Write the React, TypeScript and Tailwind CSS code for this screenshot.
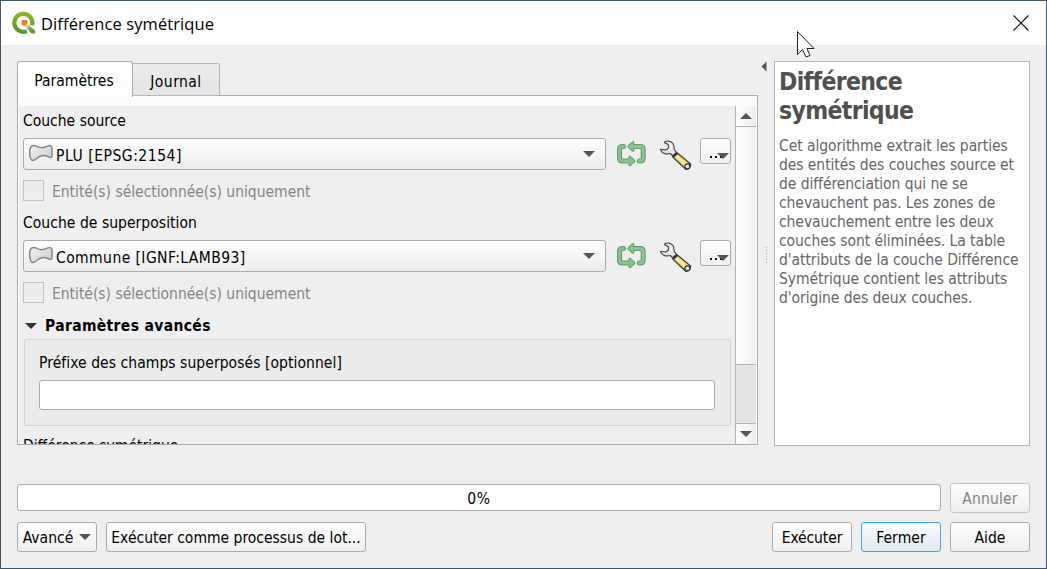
import type { ReactNode } from 'react';

const FONT = "font-['DejaVu_Sans_Condensed','DejaVu_Sans',sans-serif]";
const BTN = 'box-border flex items-center justify-center rounded-[3px] border bg-linear-to-b from-[#fefefe] to-[#f0f0f0] pt-0.5 whitespace-nowrap';

function Down({ className = '', fill = '#555' }: { className?: string; fill?: string }) {
  return (
    <svg className={className} width="12" height="6" viewBox="0 0 12 6" fill={fill}>
      <path d="M0 0H12L6 6Z" />
    </svg>
  );
}

function QgisLogo() {
  return (
    <svg width="24" height="24" viewBox="0 0 24 24" fill="none">
      <defs>
        <linearGradient id="ring" x1="0" y1="0" x2="0" y2="1">
          <stop offset="0" stopColor="#93b023" />
          <stop offset="1" stopColor="#589632" />
        </linearGradient>
        <linearGradient id="tail" x1="12" y1="11" x2="21" y2="20" gradientUnits="userSpaceOnUse">
          <stop offset="0" stopColor="#f3a24f" />
          <stop offset=".35" stopColor="#e3d9a8" />
          <stop offset=".7" stopColor="#7fae55" />
          <stop offset="1" stopColor="#5a9733" />
        </linearGradient>
      </defs>
      <path d="M14.800 20.100A9 9 0 1 1 20 14.200" stroke="url(#ring)" strokeWidth="4.200" />
      <path d="M15 11.800L23.400 19.800V22.800H19.600L12 15Z" fill="url(#tail)" stroke="#fff" strokeWidth=".6" />
      <path d="M9.600 9H15.400V12.500L12.800 15L9.600 14Z" fill="#ee7f1d" />
    </svg>
  );
}

function Polygon() {
  return (
    <svg width="26" height="20" viewBox="0 0 26 20">
      <defs>
        <linearGradient id="pg" x1="0" y1="0" x2="1" y2="1">
          <stop offset="0" stopColor="#f4f4f4" />
          <stop offset="1" stopColor="#cbcbcb" />
        </linearGradient>
      </defs>
      <path d="M2.500 4.500C4.200 1.700 7 2.400 9.300 3.600C13 5.700 16.500 4.600 20 2.900C22.500 2 24 3.300 24 5.500V13C23.500 15.200 21.700 14.600 20 13.500C16 11.700 11.800 12.400 9 15.300C6.200 18 3.600 18.300 2.500 15.200C1.300 11.500 1.300 8 2.500 4.500Z" fill="url(#pg)" stroke="#888" strokeWidth="1.500" />
    </svg>
  );
}

function Iterate() {
  const right = 'M15 7.500H23.200Q26.200 7.500 26.200 10.500V19Q26.200 22 23.200 22H22.400';
  const left = 'M6.500 7.500H5.500Q2.500 7.500 2.500 10.500V19Q2.500 22 5.500 22H14';
  const up = 'M16 3.500V11.500L11.500 7.500Z';
  const down = 'M12.700 18V26L17.200 22Z';
  return (
    <svg width="31" height="30" viewBox="-1 0 31 30" fill="none" strokeLinejoin="round" strokeLinecap="round">
      <g stroke="#5f9d66">
        <path d={left} strokeWidth="5" />
        <path d={right} strokeWidth="5" />
        <path d={up} strokeWidth="2.600" />
        <path d={down} strokeWidth="2.600" />
      </g>
      <g stroke="#8fc293">
        <path d={left} strokeWidth="2.800" />
        <path d={right} strokeWidth="2.800" />
        <path d={up} fill="#8fc293" strokeWidth=".6" />
        <path d={down} fill="#8fc293" strokeWidth=".6" />
      </g>
    </svg>
  );
}

function Wrench() {
  return (
    <svg width="33" height="31" viewBox="0 0 33 31" strokeLinejoin="round">
      <path d="M13.800 17L18.400 13L31.600 24Q32 28.500 27 29.500Z" fill="#efd878" stroke="#3a3a36" strokeWidth="1.200" />
      <path d="M17 16L27 25" stroke="#f8eaa4" strokeWidth="1.800" />
      <circle cx="28.400" cy="26.300" r="2.500" fill="#e8e2d8" stroke="#3a3230" strokeWidth="1.200" />
      <path d="M5.500 2C8 .3 12 .7 14 3.500C15.300 5.500 14.800 8 15.500 9.800L18 13L14 16.500L11.500 13.500C8 14.500 3 14 1.500 9.500C3 8.500 4.500 10.500 7 9.800C9 9 10 7 9.300 5C8.500 3.300 6 4 5.500 2Z" fill="#e4e4e4" stroke="#4a4a4a" strokeWidth="1.200" />
      <path d="M11 3.200C13 5 12 8 12.500 10" stroke="#fff" strokeWidth="1.200" fill="none" />
      <path d="M14 16.500L18 13" stroke="#333" strokeWidth="2.800" />
    </svg>
  );
}

function LayerRow({ name, spacing }: { name: string; spacing: string }) {
  return (
    <div className="flex h-8">
      <div className="box-border flex h-8 w-[583px] items-center rounded-[3px] border border-[#ababab] bg-linear-to-b from-[#fefefe] to-[#ededed] pl-[4px] pr-[10px]">
        <div className="-mt-0.5"><Polygon /></div>
        <span className={`ml-[2px] mt-[3px] flex-1 ${spacing}`}>{name}</span>
        <Down />
      </div>
      <div className="ml-[10px] mt-px w-[30px]"><Iterate /></div>
      <div className="ml-[13px] mt-[2px] w-8"><Wrench /></div>
      <div className="ml-[9px] box-border flex h-[26px] w-[31px] rounded-[3px] border border-[#ababab] bg-linear-to-b from-[#fefefe] to-[#f0f0f0]">
        <div className="ml-[9px] mt-[17px] flex gap-[3px]">
          <i className="size-[2px] bg-[#111]" />
          <i className="size-[2px] bg-[#111]" />
          <i className="size-[2px] bg-[#111]" />
        </div>
        <Down className="-ml-[5px] mt-[14px]" />
      </div>
    </div>
  );
}

function SelectedOnly() {
  return (
    <div className="mt-[10px] flex h-[22px] items-start">
      <div className="box-border size-[21px] border border-[#c1c1c1] bg-linear-to-b from-[#ebebeb] to-[#f0f0f0]" />
      <span className="ml-2 mt-[2px] tracking-[-0.02px] text-[#858585]">Entité(s) sélectionnée(s) uniquement</span>
    </div>
  );
}

function Label({ children, className = '' }: { children: ReactNode; className?: string }) {
  return <div className={`h-5 leading-5 ${className}`}>{children}</div>;
}

export default function App() {
  return (
    <div className={`box-border flex h-[569px] w-[1047px] flex-col overflow-hidden border border-[#435669] bg-[#efefef] text-[15.500px] leading-5 whitespace-nowrap text-black ${FONT}`}>
      <header className="flex h-11 shrink-0 items-center bg-white pl-[11px] pr-[17px]">
        <QgisLogo />
        <span className="ml-[5px] mt-px flex-1 font-['Open_Sans','Noto_Sans',sans-serif] text-[16.500px] tracking-[0.1px]">Différence symétrique</span>
        <svg width="16" height="16" viewBox="0 0 16 16" stroke="#111" strokeWidth="1.100"><path d="M.5 .5L15.500 15.500M15.500 .5L.5 15.500" /></svg>
      </header>

      <main className="flex h-[401px] shrink-0 pl-4 pr-4 pt-4">
        <section className="w-[741px] shrink-0">
          <div className="relative z-10 flex h-[35px] items-start">
            <div className="box-border flex h-[36px] w-[116px] items-center justify-center rounded-t-[3px] border border-b-0 border-[#ababab] bg-linear-to-b from-white to-[#fcfcfc] pt-[3px] pr-0.5">Paramètres</div>
            <div className="mt-[2px] box-border flex h-[33px] w-[87px] items-center justify-center rounded-tr-[3px] border border-l-0 border-[#b5b5b5] bg-linear-to-b from-[#ececec] to-[#e4e4e4] pt-[5px] tracking-[0.45px]">Journal</div>
          </div>
          <div className="-mt-px box-border flex h-[350px] border border-[#ababab] bg-[#fcfcfc] pl-px pr-px pt-[10px]">
            <div className="h-[338px] w-[716px] overflow-hidden bg-[#efefef] pl-1">
              <Label className="mt-[5px]">Couche source</Label>
              <div className="mt-[7px]"><LayerRow name="PLU [EPSG:2154]" spacing="tracking-[0.53px]" /></div>
              <SelectedOnly />
              <Label className="mt-[11px] tracking-[0.04px]">Couche de superposition</Label>
              <div className="mt-[7px]"><LayerRow name="Commune [IGNF:LAMB93]" spacing="tracking-[0.42px]" /></div>
              <SelectedOnly />
              <Label className="mt-[12px] flex items-center font-bold tracking-[0.35px]">
                <Down className="ml-[2px] mr-2" fill="#333" />Paramètres avancés
              </Label>
              <div className="ml-px mt-[3px] box-border h-[87px] w-[707px] rounded-[2px] border border-[#d3d3d3] bg-[#ebebeb] pl-[14px] pt-[13px]">
                <Label className="tracking-[0.06px]">Préfixe des champs superposés [optionnel]</Label>
                <div className="mt-[7px] box-border h-[30px] w-[676px] rounded-[3px] border border-[#ababab] bg-white" />
              </div>
              <Label className="mt-[10px]">Différence symétrique</Label>
            </div>
            <div className="box-border flex h-[338px] w-[21px] flex-col border-l border-[#b4b4b4]">
              <div className="flex h-[21px] items-center justify-center border-b border-[#b4b4b4] bg-linear-to-r from-white to-[#eee]"><Down className="rotate-180" /></div>
              <div className="h-[237px] bg-linear-to-r from-white to-[#f0f0f0]" />
              <div className="box-border h-[60px] border-y border-[#b4b4b4] bg-[#e4e4e4]" />
              <div className="flex h-5 items-center justify-center bg-linear-to-r from-white to-[#eee]"><Down /></div>
            </div>
          </div>
        </section>
        <div className="flex w-4 flex-col">
          <svg className="ml-[3px]" width="6" height="11" viewBox="0 0 6 11" fill="#555"><path d="M5.500 .5V10.500L.5 5.500Z" /></svg>
          <div className="ml-2 mt-[175px] h-[17px] w-px bg-[repeating-linear-gradient(to_bottom,#aaa_0px,#aaa_1px,transparent_1px,transparent_3px)]" />
        </div>
        <aside className="box-border h-[385px] w-[256px] border border-[#b4b4b4] bg-white pl-1 text-[#666]">
          <h1 className="mt-[5px] text-[24.500px] leading-[29px] font-bold tracking-[-0.65px] text-[#505050]">Différence<br />symétrique</h1>
          <p className="mt-[12px] leading-[19px] tracking-[-0.07px]">
            Cet algorithme extrait les parties<br />des entités des couches source et<br />de différenciation qui ne se<br />chevauchent pas. Les zones de<br />chevauchement entre les deux<br />couches sont éliminées. La table<br />d'attributs de la couche Différence<br />Symétrique contient les attributs<br />d'origine des deux couches.
          </p>
        </aside>
      </main>

      <footer className="px-4">
        <div className="mt-[37px] flex items-start gap-[9px]">
          <div className="mt-px box-border flex h-[27px] w-[924px] items-center justify-center rounded-[3px] border border-[#ababab] bg-white pt-[3px] tracking-[0.6px]">0%</div>
          <div className={`${BTN} h-[30px] w-20 border-[#c4c4c4] tracking-[0.15px] text-[#858585]`}>Annuler</div>
        </div>
        <div className="mt-[9px] flex gap-[9px]">
          <div className={`${BTN} h-[30px] w-20 gap-[6px] border-[#ababab]`}>Avancé<Down className="-mt-0.5" /></div>
          <div className={`${BTN} h-[30px] w-[260px] border-[#ababab]`}>Exécuter comme processus de lot...</div>
          <div className="flex-1" />
          <div className={`${BTN} h-[30px] w-20 border-[#ababab] tracking-[-0.1px]`}>Exécuter</div>
          <div className="box-border flex h-[30px] w-20 items-center justify-center rounded-[3px] border border-[#3da5f4] bg-linear-to-b from-[#fcfdfe] to-[#e1e8ef] pt-0.5 tracking-[0.1px]">Fermer</div>
          <div className={`${BTN} h-[30px] w-20 border-[#ababab]`}>Aide</div>
        </div>
      </footer>

      <svg className="absolute left-[796px] top-[30px]" width="21" height="30" viewBox="0 0 21 30">
        <path d="M1.500 1.500V24.500L6.500 19.500L10 27L14 25.500L11 18.500H18Z" fill="#fff" stroke="#222" />
      </svg>
    </div>
  );
}
